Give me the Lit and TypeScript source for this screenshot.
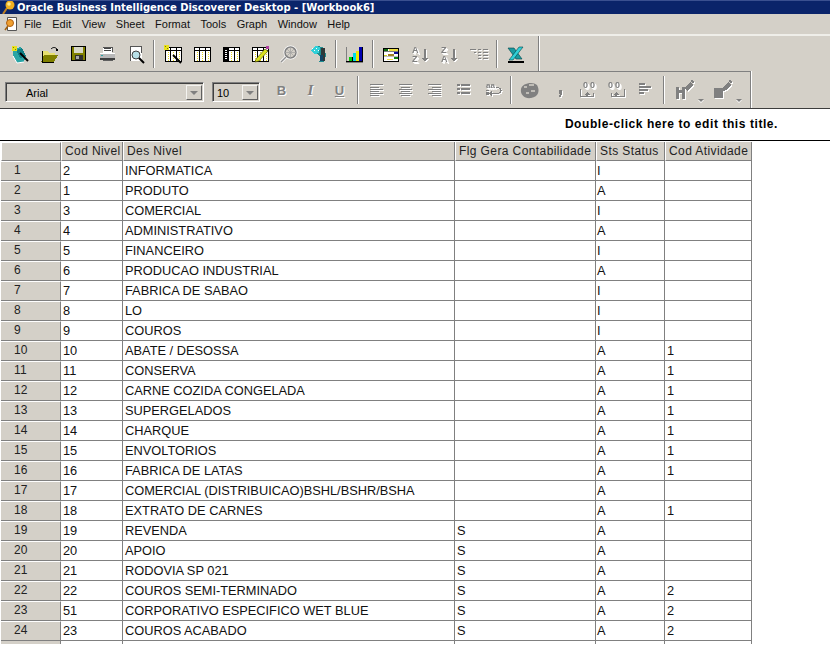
import { LitElement, html, css, svg } from "lit";
import { customElement } from "lit/decorators.js";

const R = (x: number, y: number, w: number, h: number, f: string) =>
  svg`<rect x=${x} y=${y} width=${w} height=${h} fill=${f}></rect>`;
const ic = (body: unknown, w = 20, h = 20) =>
  html`<svg class="ico" width=${w} height=${h} viewBox="0 0 ${w} ${h}" shape-rendering="crispEdges">${body}</svg>`;
const dis = (d: string) =>
  svg`<path d=${d} fill="#fff" transform="translate(1 1)"></path><path d=${d} fill="#808080"></path>`;

const dotted = (x: number, y: number, h: number) => {
  const out = [];
  for (let i = 0; i < h; i += 2) out.push(R(x, y + i, 1, 1, "#e8d820"));
  return out;
};
const table = (x: number, y: number) => svg`
  ${R(x, y, 17, 15, "#000")}${R(x + 1, y + 1, 15, 13, "#fff")}${R(x + 1, y + 3, 15, 1, "#000")}
  ${R(x + 5, y + 1, 1, 13, "#000")}${R(x + 11, y + 1, 1, 13, "#000")}
  ${dotted(x + 3, y + 5, 9)}${dotted(x + 8, y + 5, 9)}${dotted(x + 14, y + 5, 9)}`;
const wand = (x: number, y: number) =>
  svg`<path d="M${x} ${y}l8 8" stroke="#000" stroke-width="2" shape-rendering="auto"></path>`;
const sparkle = (x: number, y: number) => svg`${R(x, y, 5, 5, "#e8e020")}${R(x + 1, y + 1, 1, 1, "#808000")}${R(x + 3, y + 3, 1, 1, "#808000")}`;

const ICONS: Record<string, unknown> = {
  wizard: ic(svg`<path d="M3 5l8-2 5 9-2 6-7 1-4-8z" fill="#2aa5a5"></path><path d="M6 6l6-2 4 8-6 2z" fill="#0f7f86"></path><path d="M3 12l4 7 7-1" fill="none" stroke="#fff" shape-rendering="auto"></path>${sparkle(2, 2)}${wand(10, 9)}`),
  open: ic(svg`<path d="M3 7h6l1 2h6v3H8l-3 6H3z" fill="#e8e070"></path><path d="M5 11h14l-4 7H2z" fill="#808000"></path><path d="M3 18h12M3 7v11" stroke="#000"></path><path d="M12 5c2-2 4-2 6 0" fill="none" stroke="#000" shape-rendering="auto"></path>${R(17, 5, 2, 2, "#000")}`),
  save: ic(svg`${R(3, 2, 15, 15, "#000")}${R(4, 3, 13, 13, "#808000")}${R(6, 3, 9, 6, "#d8d8c8")}${R(7, 11, 8, 5, "#303030")}${R(8, 12, 3, 3, "#aaa")}`),
  print: ic(svg`${R(6, 3, 9, 6, "#fff")}${R(7, 4, 7, 1, "#444")}${R(7, 6, 7, 1, "#444")}<path d="M6 3h9v5" fill="none" stroke="#555"></path>${R(3, 9, 15, 6, "#b8b8b8")}${R(3, 9, 15, 1, "#fff")}${R(3, 14, 15, 2, "#404040")}${R(4, 11, 2, 1, "#2aa5a5")}${R(6, 16, 10, 1, "#606060")}`),
  preview: ic(svg`${R(4, 2, 12, 15, "#fff")}<path d="M4.500 17V2.500H15.500V9" fill="none" stroke="#555"></path><circle cx="10" cy="11" r="4" fill="#b8e0e8" stroke="#404040" shape-rendering="auto"></circle><path d="M13 14l5 5" stroke="#000" stroke-width="2" shape-rendering="auto"></path>`),
  tableWiz: ic(svg`${table(2, 3)}${sparkle(1, 1)}${wand(10, 11)}`),
  table: ic(table(2, 3)),
  tableHdr: ic(svg`${table(2, 3)}${R(3, 4, 4, 13, "#000")}${R(4, 6, 2, 1, "#fff")}${R(4, 8, 2, 1, "#fff")}${R(4, 10, 2, 1, "#fff")}${R(4, 12, 2, 1, "#fff")}${R(4, 14, 2, 1, "#fff")}`),
  tablePen: ic(svg`${table(2, 3)}<path d="M6 15l9-10 3 2-9 10-4 1z" fill="#d8e020" stroke="#404000" stroke-width=".6" shape-rendering="auto"></path>${R(16, 2, 3, 3, "#b040a0")}`),
  find: ic(svg`<g shape-rendering="auto"><circle cx="11.500" cy="8.500" r="6" fill="none" stroke="#fff" stroke-width="2"></circle><circle cx="11.500" cy="8.500" r="5.500" fill="none" stroke="#808080" stroke-width="1.500"></circle><path d="M11.500 3v11M6 8.500h11M8 5l7 7M15 5l-7 7" stroke="#a0a0a0" stroke-width=".7"></path><path d="M7 13l-5 5" stroke="#fff" stroke-width="3"></path><path d="M7 13l-5 5" stroke="#909090" stroke-width="1.500"></path></g>`),
  globe: ic(svg`<path d="M5 6l6-4 5 2 2 7-2 7-5 0 2-5z" fill="#1f8d90"></path><path d="M13 4h4v13h-4z" fill="#303838"></path><path d="M3 6l5-4 4 1-1 6-5 1z" fill="#30d0d8"></path>${R(4, 4, 1, 1, "#fff")}${R(6, 6, 1, 1, "#fff")}${R(8, 4, 1, 1, "#fff")}${R(10, 6, 1, 1, "#fff")}${R(12, 11, 3, 6, "#146")}`),
  chart: ic(svg`${R(1, 3, 1, 14, "#808080")}${R(1, 17, 17, 1, "#000")}${R(1, 18, 17, 1, "#808080")}${R(4, 13, 3, 4, "#00d000")}${R(8, 9, 3, 8, "#00d8e8")}${R(11, 7, 3, 10, "#f0e800")}${R(14, 3, 3, 14, "#0000b0")}${R(7, 13, 1, 4, "#000")}${R(17, 3, 1, 14, "#000")}`),
  crosstab: ic(svg`${R(1, 4, 16, 14, "#000")}${R(2, 5, 14, 12, "#fff")}${R(2, 5, 4, 3, "#107010")}${R(7, 5, 9, 2, "#f0e040")}${R(12, 8, 4, 2, "#101090")}${R(6, 10, 6, 2, "#a08020")}${R(2, 11, 3, 2, "#d0d020")}${R(12, 13, 4, 2, "#108010")}${R(5, 15, 6, 1, "#f0e040")}${R(2, 7, 14, 1, "#808080")}${R(2, 12, 14, 1, "#c0c0c0")}`),
  sortAZ: ic(svg`<text x="1" y="9" class="mini">A</text><text x="1" y="18" class="mini">Z</text>${dis("M13 5h2v9h2l-3 4-3-4h2z")}`),
  sortZA: ic(svg`<text x="1" y="9" class="mini">Z</text><text x="1" y="18" class="mini">A</text>${dis("M13 5h2v9h2l-3 4-3-4h2z")}`),
  lines: ic(svg`${dis("M1 5h6v1H1zM9 5h3v1H9zM14 5h5v1h-5zM5 8h2v1H5zM9 8h3v1H9zM14 8h5v1h-5zM9 11h3v1H9zM14 11h5v1h-5zM9 14h3v1H9zM14 14h5v1h-5z")}`),
  excel: ic(svg`<g shape-rendering="auto"><path d="M2 4h6l8 11h-6z" fill="#1a9aa0" stroke="#004448" stroke-width=".6"></path><path d="M17 3h-4L3 16h4z" fill="#30d0d8" stroke="#004448" stroke-width=".6"></path></g>${R(2, 17, 16, 2, "#000")}`),
  left: ic(dis("M3 4h13v1H3zM3 7h9v1H3zM3 9h13v1H3zM3 11h9v1H3zM3 13h13v1H3zM3 15h9v1H3z")),
  center: ic(dis("M3 4h13v1H3zM5 7h9v1H5zM3 9h13v1H3zM5 11h9v1H5zM3 13h13v1H3zM5 15h9v1H5z")),
  right: ic(dis("M3 4h13v1H3zM7 7h9v1H7zM3 9h13v1H3zM7 11h9v1H7zM3 13h13v1H3zM7 15h9v1H7z")),
  list: ic(dis("M3 4h3v2H3zM7 4h9v2H7zM3 8h3v2H3zM7 8h9v2H7zM3 12h3v2H3zM7 12h9v2H7z")),
  wrap: ic(svg`<text x="3" y="8" class="mini s">aa</text>${dis("M3 10h3v1H3zM3 12h3v3H3zM9 13h6c3 0 3-5 0-5h-2V7h2c5 0 5 7 0 7H9v2l-3-2.500L9 11z")}`),
  currency: ic(svg`<g shape-rendering="auto"><path d="M1 9C2 3 13 1 17 5c3 5 2 12-6 13C5 19 0 15 1 9z" fill="#808080"></path><path d="M4 7h3M9 5h5M6 13h3M11 11h4" stroke="#d4d0c8" stroke-width="1.500"></path></g>`),
  comma: ic(dis("M10 10h3v4l-1 3h-2l1-3h-1z")),
  decUp: ic(svg`<text x="5" y="8" class="mini z">0</text><text x="12" y="8" class="mini z">0</text>${dis("M2 9h1v7h12v-3h1v4H2zM9 12l3 3H10v1H8v-1H6z")}`),
  decDn: ic(svg`<text x="1" y="8" class="mini z">0</text><text x="8" y="8" class="mini z">0</text>${dis("M18 9h-1v7H5v-3H4v4h14zM9 12l3 3H10v1H8v-1H6z")}`),
  outdent: ic(dis("M3 3h6v2H3zM3 6h12v2H3zM3 9h9v2H3zM3 12h5v2H3z")),
  paintH: ic(dis("M1 8h3v3h3V8h3v12H7v-6H4v6H1zM10 9l5-6 3 3-4 5-2 1zM15 2l2-1 2 2-1 2z"), 22, 22),
  paintF: ic(dis("M1 9h9v10H1zM9 9l6-6 3 3-5 5-3 1zM15 2l2-1 2 2-1 2z"), 22, 22),
};

type Row = [string, string, string, string, string];
const ROWS: Row[] = [
  ["2", "INFORMATICA", "", "I", ""],
  ["1", "PRODUTO", "", "A", ""],
  ["3", "COMERCIAL", "", "I", ""],
  ["4", "ADMINISTRATIVO", "", "A", ""],
  ["5", "FINANCEIRO", "", "I", ""],
  ["6", "PRODUCAO INDUSTRIAL", "", "A", ""],
  ["7", "FABRICA DE SABAO", "", "I", ""],
  ["8", "LO", "", "I", ""],
  ["9", "COUROS", "", "I", ""],
  ["10", "ABATE / DESOSSA", "", "A", "1"],
  ["11", "CONSERVA", "", "A", "1"],
  ["12", "CARNE COZIDA CONGELADA", "", "A", "1"],
  ["13", "SUPERGELADOS", "", "A", "1"],
  ["14", "CHARQUE", "", "A", "1"],
  ["15", "ENVOLTORIOS", "", "A", "1"],
  ["16", "FABRICA DE LATAS", "", "A", "1"],
  ["17", "COMERCIAL (DISTRIBUICAO)BSHL/BSHR/BSHA", "", "A", ""],
  ["18", "EXTRATO DE CARNES", "", "A", "1"],
  ["19", "REVENDA", "S", "A", ""],
  ["20", "APOIO", "S", "A", ""],
  ["21", "RODOVIA SP 021", "S", "A", ""],
  ["22", "COUROS SEMI-TERMINADO", "S", "A", "2"],
  ["51", "CORPORATIVO ESPECIFICO WET BLUE", "S", "A", "2"],
  ["23", "COUROS ACABADO", "S", "A", "2"],
];
const HEADERS = ["Cod Nivel", "Des Nivel", "Flg Gera Contabilidade", "Sts Status", "Cod Atividade"];
const MENUS = ["File", "Edit", "View", "Sheet", "Format", "Tools", "Graph", "Window", "Help"];

@customElement("app-root")
export class AppRoot extends LitElement {
  static styles = css`
    :host { display: block; width: 830px; height: 645px; overflow: hidden; background: #fff;
      font-family: "Liberation Sans", Arial, sans-serif; color: #000; }
    .titlebar { height: 14px; box-sizing: border-box; border-top: 1px solid #3a5090; background: #0a246a; color: #fff;
      display: flex; align-items: center; font-family: "DejaVu Sans", sans-serif; font-weight: bold; font-size: 10px; line-height: 13px; white-space: nowrap; overflow: hidden; }
    .titlebar svg { flex: none; margin: 0 1px 0 2px; }
    .chrome { background: #d4d0c8; }
    .menubar { height: 20px; display: flex; align-items: center; font-size: 11px; color: #111; border-bottom: 2px solid; border-image: linear-gradient(#808080 50%, #efeee9 50%) 1; }
    .menubar svg { margin-left: 4px; margin-right: 7px; flex: none; }
    .menu { margin-right: 10.500px; }
    .tb { display: flex; align-items: center; height: 35px; box-sizing: content-box; }
    .tb1 { padding-left: 5px; width: 533px; border-right: 1px solid #808080; box-shadow: 1px 0 0 #fff; }
    .tb2wrap { border-top: 1px solid #808080; width: 750px; border-right: 1px solid #808080; box-shadow: 1px 0 0 #fff; }
    .tb2 { padding-left: 5px; height: 36px; }
    .btn { width: 29px; height: 24px; flex: none; display: flex; align-items: center; justify-content: center; font-size: 13px; font-weight: bold; color: #808080; text-shadow: 1px 1px 0 #fff; }
    .btn.wide { width: 38px; justify-content: flex-start; padding-left: 7px; box-sizing: border-box; }
    .btn.it { font-family: "Liberation Serif", serif; font-style: italic; font-size: 15px; }
    .btn.un { text-decoration: underline; }
    .caret { width: 0; height: 0; border: 3px solid transparent; border-top: 3px solid #808080; border-bottom: 0; margin: 20px 0 0 1px; flex: none; filter: drop-shadow(0 1px 0 #fff); }
    .sep { width: 8px; height: 28px; flex: none; position: relative; }
    .sep::before { content: ""; position: absolute; left: 3px; top: 0; bottom: 0; width: 1px; background: #808080; box-shadow: 1px 0 0 #fff; }
    .ico { display: block; flex: none; }
    .mini { font: bold 9px "Liberation Sans", sans-serif; fill: #808080; filter: drop-shadow(1px 1px 0 #fff); }
    .mini.s { font-size: 8px; }
    .combo { height: 20px; margin-top: 4px; box-sizing: border-box; flex: none; display: flex; align-items: center; justify-content: space-between; font-size: 11px;
      border: 1px solid; border-color: #808080 #fff #fff #808080; box-shadow: inset 1px 1px 0 #404040; padding: 2px 1px 1px 2px; }
    .combo .arrow { width: 16px; height: 15px; box-sizing: border-box; background: #d4d0c8; border: 1px solid; border-color: #f4f3f0 #606060 #606060 #f4f3f0; display: flex; align-items: center; justify-content: center; }
    .arrow i { display: block; width: 0; height: 0; border: 4px solid transparent; border-top: 4px solid #808080; border-bottom: 0; }
    .c1 { width: 199px; margin-right: 8px; }
    .c1 span { padding-left: 18px; }
    .c2 { width: 48px; margin-right: 7px; }
    .c2 span { padding-left: 2px; }
    .hline { height: 1px; background: #3c3c3c; }
    .title { height: 32px; box-sizing: border-box; text-align: right; padding: 8px 52px 0 0; font-weight: bold; font-size: 12px; line-height: 15px; letter-spacing: .57px; border-bottom: 1px solid #000; }
    .grid { display: grid; grid-template-columns: 60px 62px 332px 141px 69px 87px; margin: 1px 0 0 1px; width: 751px; font-size: 12.800px; line-height: 19px; }
    .cell { height: 20px; box-sizing: border-box; border-right: 1px solid #808080; border-bottom: 1px solid #808080; padding-left: 2px; white-space: nowrap; overflow: hidden; color: #111; }
    .cell.st { padding-left: 1px; }
    .hd { height: 19px; background: #d4d0c8; padding-left: 3px; font-size: 12px; line-height: 18px; letter-spacing: .4px; border-left: 1px solid #fff; color: #222; }
    .hd.corner { border-top: 1px solid #fff; }
    .rh { background: #d4d0c8; font-size: 12px; padding-left: 13px; letter-spacing: .2px; border-top: 1px solid #fff; line-height: 17px; color: #222; }
    .stub { height: 3px; border-bottom: 0; padding: 0; }
    .stub.rh { border-top: 0; }
  `;

  private btn(name: string) {
    return html`<div class="btn">${ICONS[name]}</div>`;
  }
  private sep() {
    return html`<div class="sep"></div>`;
  }

  render() {
    const b = (n: string) => this.btn(n);
    const s = this.sep();
    return html`
      <div class="titlebar">
        <svg width="14" height="13" viewBox="0 0 14 13"><path d="M1 13l4-6" stroke="#c08020" stroke-width="2"></path><circle cx="8" cy="4" r="4.500" fill="#f0b020"></circle><circle cx="7" cy="3" r="1.800" fill="#ffe890"></circle></svg>
        <span>Oracle Business Intelligence Discoverer Desktop - [Workbook6]</span>
      </div>
      <div class="chrome">
        <div class="menubar">
          <svg width="13" height="14" viewBox="0 0 13 14"><path d="M3.500.5h9v13h-9z" fill="#fff" stroke="#555"></path><path d="M1 13l3-4" stroke="#a06010" stroke-width="1.500"></path><circle cx="6" cy="6" r="3.500" fill="#f0a030" stroke="#b06010"></circle></svg>
          ${MENUS.map((m) => html`<span class="menu">${m}</span>`)}
        </div>
        <div class="tb tb1">
          ${b("wizard")}${b("open")}${b("save")}${b("print")}${b("preview")}${s}
          ${b("tableWiz")}${b("table")}${b("tableHdr")}${b("tablePen")}${b("find")}${b("globe")}${s}
          ${b("chart")}${s}
          ${b("crosstab")}${b("sortAZ")}${b("sortZA")}${b("lines")}${s}
          ${b("excel")}
        </div>
        <div class="tb2wrap">
          <div class="tb tb2">
            <div class="combo c1"><span>Arial</span><div class="arrow"><i></i></div></div>
            <div class="combo c2"><span>10</span><div class="arrow"><i></i></div></div>
            <div class="btn">B</div>
            <div class="btn it">I</div>
            <div class="btn un">U</div>
            ${s}
            ${b("left")}${b("center")}${b("right")}${b("list")}${b("wrap")}${s}
            ${b("currency")}${b("comma")}${b("decUp")}${b("decDn")}${b("outdent")}${s}
            <div class="btn wide">${ICONS.paintH}<span class="caret"></span></div>
            <div class="btn wide">${ICONS.paintF}<span class="caret"></span></div>
          </div>
        </div>
      </div>
      <div class="hline"></div>
      <div class="title">Double-click here to edit this title.</div>
      <div class="grid">
        <div class="cell hd corner"></div>
        ${HEADERS.map((h) => html`<div class="cell hd">${h}</div>`)}
        ${ROWS.map(
          (r, i) => html`
            <div class="cell rh">${i + 1}</div>
            ${r.map((c, j) => html`<div class="cell ${j === 3 ? "st" : ""}">${c}</div>`)}
          `
        )}
        <div class="cell rh stub"></div>
        ${HEADERS.map(() => html`<div class="cell stub"></div>`)}
      </div>
    `;
  }
}
